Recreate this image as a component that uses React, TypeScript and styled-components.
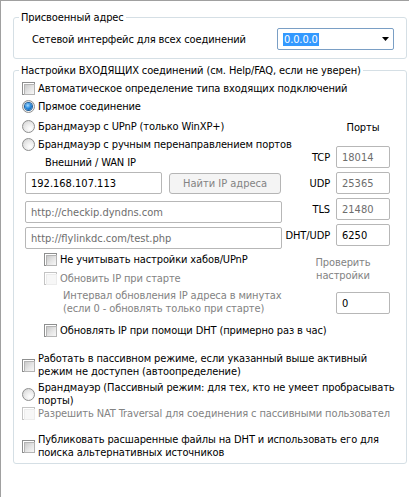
import React from 'react';
import styled, { createGlobalStyle } from 'styled-components';

const Global = createGlobalStyle`
  html, body { margin: 0; padding: 0; background: #fff; }
  * { box-sizing: border-box; }
  body {
    font-family: "DejaVu Sans Condensed", "Liberation Sans", sans-serif;
    font-size: 11px;
    letter-spacing: -0.12px;
    color: #000;
  }
`;

const Window = styled.div`
  width: 409px;
  height: 497px;
  border-top: 1px solid #a0a0a0;
  border-left: 1px solid #a0a0a0;
  padding: 10px 0 0 12px;
  background: #fff;
`;

const Group = styled.fieldset<{ $mt?: number; $pb: number }>`
  margin: ${(p) => p.$mt ?? 0}px 0 0 0;
  padding: 0 0 ${(p) => p.$pb}px 0;
  width: 394px;
  min-width: 0;
  border: 1px solid #d5dfe5;
  border-radius: 3px;
`;

const Legend = styled.legend`
  margin-left: 5px;
  padding: 0 2px;
  line-height: 13px;
  font-size: 11px;
`;

const InterfaceRow = styled.div`
  display: flex;
  align-items: center;
  justify-content: space-between;
  margin-top: 4px;
  padding: 0 12px 0 18px;
`;

const Combo = styled.div`
  width: 117px;
  height: 22px;
  border: 1px solid #7a9fc5;
  border-radius: 2px;
  background: #fff;
  display: flex;
  align-items: center;
  justify-content: space-between;
  padding: 0 4px 0 5px;
`;

const Selected = styled.span`
  background: #3399ff;
  color: #fff;
  line-height: 13px;
  padding: 0 1px;
`;

const Body = styled.div`
  padding-left: 8px;
  display: flex;
  flex-direction: column;
  align-items: flex-start;
`;

const Option = styled.label<{ $mt?: number; $ml?: number; $disabled?: boolean; $clip?: number }>`
  display: flex;
  align-items: center;
  gap: 3px;
  margin-top: ${(p) => p.$mt ?? 0}px;
  margin-left: ${(p) => p.$ml ?? 0}px;
  line-height: 13px;
  color: ${(p) => (p.$disabled ? '#838383' : '#000')};
  white-space: nowrap;
  ${(p) => (p.$clip ? `width: ${p.$clip}px; overflow: hidden;` : '')}
`;

const Check = styled.span<{ $disabled?: boolean }>`
  flex: none;
  width: 13px;
  height: 13px;
  padding: 1px;
  border: 1px solid ${(p) => (p.$disabled ? '#c4c4c4' : '#8e8f8f')};
  background: #fff;
  &::after {
    content: '';
    display: block;
    width: 100%;
    height: 100%;
    border: 1px solid ${(p) => (p.$disabled ? '#ececec' : '#b4b4b4')};
    background: ${(p) =>
      p.$disabled ? '#f7f7f7' : 'linear-gradient(135deg, #cacaca 0%, #e6e6e6 55%, #f7f7f7 100%)'};
  }
`;

const Radio = styled.span<{ $checked?: boolean }>`
  flex: none;
  width: 13px;
  height: 13px;
  border-radius: 50%;
  border: 1px solid #8e8f8f;
  background: radial-gradient(circle at 65% 70%, #ffffff 0%, #ececec 45%, #cfcfcf 100%);
  display: flex;
  align-items: center;
  justify-content: center;
  &::after {
    content: '';
    display: ${(p) => (p.$checked ? 'block' : 'none')};
    width: 7px;
    height: 7px;
    border-radius: 50%;
    background: radial-gradient(circle at 40% 35%, #a8dcff 0%, #2b8ee3 45%, #0b4a8c 100%);
    box-shadow: 0 0 0 1px #1d5f9c;
  }
`;

const Split = styled.div`
  margin-top: 7px;
  width: 368px;
  display: grid;
  grid-template-columns: minmax(0, 1fr) 110px;
`;

const LeftCol = styled.div`
  min-width: 0;
  display: flex;
  flex-direction: column;
  align-items: flex-start;
`;

const RightCol = styled.div`
  display: flex;
  flex-direction: column;
  align-items: flex-end;
`;

const Caption = styled.div<{ $mt?: number; $ml?: number; $muted?: boolean }>`
  margin-top: ${(p) => p.$mt ?? 0}px;
  margin-left: ${(p) => p.$ml ?? 0}px;
  line-height: 13px;
  color: ${(p) => (p.$muted ? '#838383' : '#000')};
  white-space: nowrap;
`;

const IpRow = styled.div`
  display: flex;
  align-items: center;
  gap: 7px;
  margin: 3px 0 0 3px;
`;

const TextBox = styled.input<{ $w: number; $mt?: number; $ml?: number; $muted?: boolean }>`
  flex: none;
  width: ${(p) => p.$w}px;
  height: 22px;
  margin: ${(p) => p.$mt ?? 0}px 0 0 ${(p) => p.$ml ?? 0}px;
  padding: 0 5px;
  border: 1px solid #b7b7b7;
  border-radius: 2px;
  background: #fff;
  font: inherit;
  font-size: 11px;
  color: ${(p) => (p.$muted ? '#6d6d6d' : '#000')};
  outline: none;
`;

const FindButton = styled.button`
  flex: none;
  width: 112px;
  height: 21px;
  border: 1px solid #b5b5b5;
  border-radius: 3px;
  background: #f4f4f4;
  color: #838383;
  font: inherit;
  font-size: 11px;
  padding: 0;
`;

const PortsHeading = styled.div`
  width: 54px;
  margin-top: 1px;
  text-align: center;
  line-height: 13px;
`;

const PortRow = styled.div<{ $mt: number }>`
  display: flex;
  align-items: center;
  gap: 6px;
  margin-top: ${(p) => p.$mt}px;
  white-space: nowrap;
`;

const CheckSettings = styled.div`
  width: 94px;
  margin-top: 10px;
  text-align: center;
  line-height: 13px;
  color: #838383;
`;

const ports = [
  { label: 'TCP', value: '18014', muted: true, mt: 12 },
  { label: 'UDP', value: '25365', muted: true, mt: 4 },
  { label: 'TLS', value: '21480', muted: true, mt: 4 },
  { label: 'DHT/UDP', value: '6250', muted: false, mt: 4 },
];

export default function App() {
  return (
    <>
      <Global />
      <Window>
        <Group $pb={8}>
          <Legend>Присвоенный адрес</Legend>
          <InterfaceRow>
            <span>Сетевой интерфейс для всех соединений</span>
            <Combo>
              <Selected>0.0.0.0</Selected>
              <svg width="7" height="4" viewBox="0 0 7 4">
                <polygon points="0,0 7,0 3.5,4" fill="#000" />
              </svg>
            </Combo>
          </InterfaceRow>
        </Group>

        <Group $mt={5} $pb={4}>
          <Legend>Настройки ВХОДЯЩИХ соединений (см. Help/FAQ, если не уверен)</Legend>
          <Body>
            <Option $mt={5}>
              <Check />
              Автоматическое определение типа входящих подключений
            </Option>
            <Option $mt={5}>
              <Radio $checked />
              Прямое соединение
            </Option>

            <Split>
              <LeftCol>
                <Option>
                  <Radio />
                  Брандмауэр с UPnP (только WinXP+)
                </Option>
                <Option $mt={5}>
                  <Radio />
                  Брандмауэр с ручным перенаправлением портов
                </Option>
                <Caption $mt={5} $ml={23}>Внешний / WAN IP</Caption>
                <IpRow>
                  <TextBox $w={137} readOnly value="192.168.107.113" />
                  <FindButton disabled>Найти IP адреса</FindButton>
                </IpRow>
                <TextBox $w={257} $mt={7} $ml={3} $muted readOnly value="http://checkip.dyndns.com" />
                <TextBox $w={257} $mt={4} $ml={3} $muted readOnly value="http://flylinkdc.com/test.php" />
                <Option $mt={4} $ml={22}>
                  <Check />
                  Не учитывать настройки хабов/UPnP
                </Option>
                <Option $mt={6} $ml={22} $disabled>
                  <Check $disabled />
                  Обновить IP при старте
                </Option>
                <Caption $mt={4} $ml={41} $muted>
                  Интервал обновления IP адреса в минутах
                  <br />
                  (если 0 - обновлять только при старте)
                </Caption>
                <Option $mt={9} $ml={22}>
                  <Check />
                  Обновлять IP при помощи DHT (примерно раз в час)
                </Option>
              </LeftCol>

              <RightCol>
                <PortsHeading>Порты</PortsHeading>
                {ports.map((p) => (
                  <PortRow key={p.label} $mt={p.mt}>
                    <span>{p.label}</span>
                    <TextBox $w={54} $muted={p.muted} readOnly value={p.value} />
                  </PortRow>
                ))}
                <CheckSettings>
                  Проверить
                  <br />
                  настройки
                </CheckSettings>
                <TextBox $w={54} $mt={10} readOnly value="0" />
              </RightCol>
            </Split>

            <Option $mt={15}>
              <Check />
              <span>
                Работать в пассивном режиме, если указанный выше активный
                <br />
                режим не доступен (автоопределение)
              </span>
            </Option>
            <Option $mt={3}>
              <Radio />
              <span>
                Брандмауэр (Пассивный режим: для тех, кто не умеет пробрасывать
                <br />
                порты)
              </span>
            </Option>
            <Option $disabled $clip={368}>
              <Check $disabled />
              Разрешить NAT Traversal для соединения с пассивными пользователями
            </Option>
            <Option $mt={13}>
              <Check />
              <span>
                Публиковать расшаренные файлы на DHT и использовать его для
                <br />
                поиска альтернативных источников
              </span>
            </Option>
          </Body>
        </Group>
      </Window>
    </>
  );
}
